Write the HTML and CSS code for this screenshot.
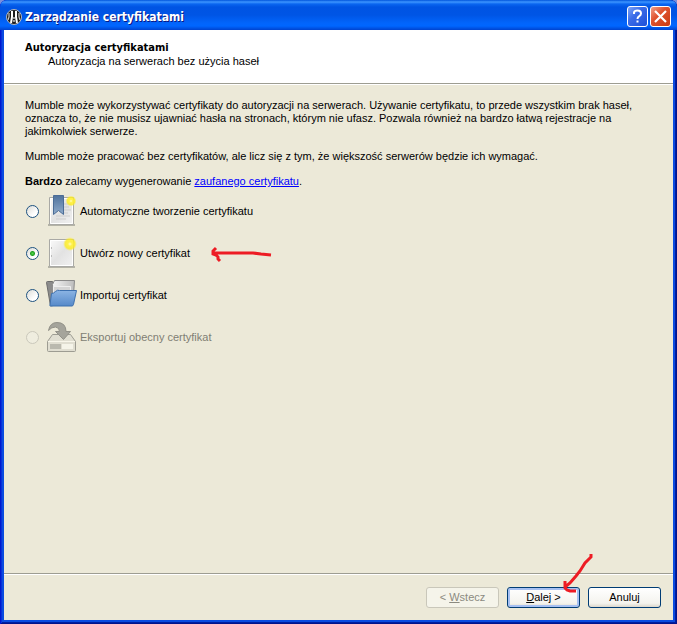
FILE: index.html
```html
<!DOCTYPE html>
<html lang="pl">
<head>
    <meta charset="utf-8">
    <title>Zarządzanie certyfikatami</title>
    <link rel="stylesheet" href="styles.css">
</head>
<body>
    <div class="window">
        <header class="titlebar">
            <svg class="app-icon" width="16" height="16" viewBox="0 0 16 16">
                <circle cx="8" cy="8" r="7.5" fill="#1a1a1a" stroke="#b4bac4"/>
                <path d="M3 4v4l-1 3M13 4v4l1 3" fill="none" stroke="#ccc" stroke-width="1.200"/>
                <path d="M6 2v6l-1 6M10 2v6l1 6" fill="none" stroke="#fff" stroke-width="2"/>
                <path d="M7 8h2v2H7zM7 11h2v2H7z" fill="#999"/>
            </svg>
            <h1 class="title">Zarządzanie certyfikatami</h1>
            <button class="caption-button help" type="button" aria-label="Pomoc">
                <svg width="21" height="21" viewBox="0 0 21 21">
                    <path d="M7 8V6.5Q7.500 4.500 10.500 4.500Q14 4.500 14 7.500Q14 9 12 10.300Q10.500 11.200 10.500 13" fill="none" stroke="#fff" stroke-width="2"/>
                    <path d="M9.500 14.500h2v2h-2z" fill="#fff"/>
                </svg>
            </button>
            <button class="caption-button close" type="button" aria-label="Zamknij">
                <svg width="21" height="21" viewBox="0 0 21 21">
                    <path d="M5 5l11 11M16 5l-11 11" stroke="#fff" stroke-width="2.200"/>
                </svg>
            </button>
        </header>

        <div class="banner">
            <h2 class="banner-title">Autoryzacja certyfikatami</h2>
            <p class="banner-text">Autoryzacja na serwerach bez użycia haseł</p>
        </div>

        <main class="content">
            <p>Mumble może wykorzystywać certyfikaty do autoryzacji na serwerach. Używanie certyfikatu, to przede wszystkim brak haseł, oznacza to, że nie musisz ujawniać hasła na stronach, którym nie ufasz. Pozwala również na bardzo łatwą rejestracje na jakimkolwiek serwerze.</p>
            <p>Mumble może pracować bez certyfikatów, ale licz się z tym, że większość serwerów będzie ich wymagać.</p>
            <p><b>Bardzo</b> zalecamy wygenerowanie <a href="#">zaufanego certyfikatu</a>.</p>

            <form class="options" id="cert-form">
                <label class="option">
                    <input type="radio" name="cert">
                    <svg width="32" height="32" viewBox="0 0 32 32">
                        <use href="#sheet"/>
                        <path d="M18 9h7M18 12h5M18 15h7M18 18h4M10 21h14M10 24h10" stroke="#cdcdcd"/>
                        <path d="M7.500.500h10v19l-5-4-5 4z" fill="url(#ribbon)" stroke="#4b6c96"/>
                        <circle cx="25" cy="6" r="5.500" fill="url(#glow)"/>
                    </svg>
                    <span>Automatyczne tworzenie certyfikatu</span>
                </label>
                <label class="option">
                    <input type="radio" name="cert" checked>
                    <svg width="32" height="32" viewBox="0 0 32 32">
                        <use href="#sheet"/>
                        <path d="M5.500 10v2M5.500 18v2" stroke="#bbb"/>
                        <circle cx="24" cy="7" r="7" fill="url(#glow)"/>
                    </svg>
                    <span>Utwórz nowy certyfikat</span>
                    <svg class="pen-arrow" width="62" height="18" viewBox="0 0 62 18">
                        <path d="M5 2L2 5v3l3 1M3 7h39l8 1 10 1M4 8l3 3v2l2 2" />
                    </svg>
                </label>
                <label class="option">
                    <input type="radio" name="cert">
                    <svg width="32" height="32" viewBox="0 0 32 32">
                        <path d="M.500 3.500q0-1 1-1h5l2 3h5v20l-9 1.500z" fill="#8c8c8c" stroke="#6d6d6d"/>
                        <path d="M6.500 5.500l2-4h20l-1 14-20 8z" fill="url(#silver)" stroke="#8a8a8a"/>
                        <path d="M7.500 7.500h17v8h-17z" fill="#d4d4d4" stroke="#eee"/>
                        <path d="M5.500 14.500q2 0 4-2t4-1h17l-3 14q-.500 1.500-1.500 1.500H4.500q-1 0-.500-1z" fill="url(#folder)" stroke="#3d70ae"/>
                    </svg>
                    <span>Importuj certyfikat</span>
                </label>
                <label class="option disabled">
                    <input type="radio" name="cert" disabled>
                    <svg width="32" height="32" viewBox="0 0 32 32">
                        <path d="M6.500 13.500h18l5 7v9q0 1-1 1h-26q-1 0-1-1v-9z" fill="#e0ded1" stroke="#9d9c92"/>
                        <path d="M2 20.500h27" stroke="#f8f6ea"/>
                        <path d="M4 23h11v5H4z" fill="#bab9ae"/>
                        <path d="M16 23h11v5H16z" fill="#f5f4e9"/>
                        <path d="M2.500 9.500Q4 1.500 11 1.500q9 0 9 9h4.500l-7 8-8-8h4q0-4-4-4.500-4 0-7 3.500z" fill="#a5a49b" stroke="#929188"/>
                    </svg>
                    <span>Eksportuj obecny certyfikat</span>
                </label>
            </form>
        </main>

        <footer class="buttons">
            <button class="button" type="button" disabled>&lt; <u>W</u>stecz</button>
            <button class="button default" type="submit" form="cert-form"><u>D</u>alej &gt;
                <svg class="pen-arrow-next" width="34" height="44" viewBox="0 0 34 44">
                    <path d="M31 2v3l-6 6-5 8-4 5-6 7-5 4M5 29v7l2 2 3 1h6" />
                </svg>
            </button>
            <button class="button" type="button">Anuluj</button>
        </footer>
    </div>

    <!-- shared gradients and shapes -->
    <svg class="defs" width="0" height="0">
        <defs>
            <linearGradient id="paper" x1="0" y1="0" x2="1" y2="1">
                <stop offset="0" stop-color="#fbfbfb"/>
                <stop offset=".5" stop-color="#e2e2e2"/>
                <stop offset="1" stop-color="#f2f2f2"/>
            </linearGradient>
            <linearGradient id="silver" x1="0" y1="0" x2="1" y2="0">
                <stop offset="0" stop-color="#f4f4f4"/>
                <stop offset="1" stop-color="#bdbdbd"/>
            </linearGradient>
            <linearGradient id="ribbon" x1="0" y1="0" x2="0" y2="1">
                <stop offset="0" stop-color="#4f729c"/>
                <stop offset="1" stop-color="#8fabcb"/>
            </linearGradient>
            <linearGradient id="folder" x1="0" y1="0" x2="0" y2="1">
                <stop offset="0" stop-color="#8db5e4"/>
                <stop offset="1" stop-color="#5589c9"/>
            </linearGradient>
            <radialGradient id="glow">
                <stop offset="0" stop-color="#fffcc0"/>
                <stop offset=".3" stop-color="#fff14a"/>
                <stop offset=".7" stop-color="#fdec1c" stop-opacity=".8"/>
                <stop offset="1" stop-color="#fdee50" stop-opacity="0"/>
            </radialGradient>
            <g id="sheet">
                <path d="M2 30h27" stroke="#b4b3a6" stroke-width="2"/>
                <path d="M3.500 2.500h24v27h-24z" fill="url(#paper)" stroke="#a9a9a5"/>
                <path d="M4.500 3.500h22v25h-22z" fill="none" stroke="#fff"/>
            </g>
        </defs>
    </svg>
</body>
</html>
```
FILE: styles.css
```css
* {
    box-sizing: border-box;
}

body {
    margin: 0;
    background: #7a8fdc;
    color: #000;
    font: 11px/13px "Liberation Sans", Tahoma, sans-serif;
}

h1, h2, p {
    margin: 0;
    font-size: 11px;
}

.defs {
    position: absolute;
}

.window {
    display: flex;
    flex-direction: column;
    min-height: 100vh;
    padding: 0 4px 4px;
    background: #0a4be0;
    border-radius: 7px 7px 0 0;
    box-shadow: inset 1px 0 #0019cf, inset -1px 0 #00138c, inset 0 -1px #00138c, inset 2px 0 #0831d9, inset -2px 0 #001ea0, inset 0 -2px #001ea0;
}

/* title bar */
.titlebar {
    display: flex;
    align-items: center;
    gap: 2px;
    height: 30px;
    margin: 0 -4px;
    padding: 3px 6px 0;
    border-radius: 7px 7px 0 0;
    background: linear-gradient(#0054dc, #3d95ff 2px, #0a66f0 4px, #0054e3 7px, #0055e5 15px, #0265fb 23px, #0066ff 26px, #0043cf);
}

.title {
    flex: 1;
    padding-left: 1px;
    color: #fff;
    font: bold 12px/16px "DejaVu Sans Condensed", "Trebuchet MS", sans-serif;
    text-shadow: 1px 1px #0a1883;
}

.caption-button {
    width: 21px;
    height: 21px;
    padding: 0;
    border: 1px solid #fff;
    border-radius: 3px;
}

.caption-button svg {
    display: block;
    margin: -1px;
}

.help {
    background: linear-gradient(135deg, #7fa5f7, #3a6be8 40%, #1c50d8);
}

.close {
    background: linear-gradient(135deg, #f0a08a, #e0532f 40%, #c93a12);
}

/* wizard header */
.banner {
    padding: 11px 21px 15px;
    background: #fff;
    border-bottom: 1px solid #9d9d92;
}

.banner-title {
    font-family: "DejaVu Sans Condensed", Tahoma, sans-serif;
}

.banner-text {
    padding: 1px 0 0 23px;
}

.content {
    flex: 1;
    padding: 14px 21px;
    background: #ece9d8;
    border-top: 1px solid #fff;
}

.content p {
    margin-bottom: 12px;
}

.content a {
    color: #00f;
}

/* certificate choices */
.options {
    display: flex;
    flex-direction: column;
    align-items: flex-start;
    gap: 10px;
    margin-top: -5px;
}

.option {
    position: relative;
    display: flex;
    align-items: center;
}

.option input {
    appearance: none;
    width: 13px;
    height: 13px;
    margin: 0 7px 0 1px;
    border: 1px solid #1d5281;
    border-radius: 50%;
    background: linear-gradient(135deg, #dcdcd7, #fff 70%);
}

.option input:checked {
    background: radial-gradient(circle, #55d551, #21a121 2px, #21a12100 3px), linear-gradient(135deg, #dcdcd7, #fff 70%);
}

.option input:disabled {
    border-color: #cac8bb;
    background: #efeddf;
}

.option span {
    padding-left: 2px;
}

.disabled {
    color: #7f7e74;
}

/* red pen marks */
.pen-arrow,
.pen-arrow-next {
    position: absolute;
    fill: none;
    stroke: #ed1c24;
    stroke-width: 3;
    pointer-events: none;
}

.pen-arrow {
    top: 9px;
    left: 186px;
}

.pen-arrow-next {
    top: -36px;
    left: 52px;
}

/* footer buttons */
.buttons {
    display: flex;
    justify-content: flex-end;
    gap: 8px;
    padding: 13px 12px 12px;
    background: #ece9d8;
    border-top: 1px solid #9d9d92;
    box-shadow: inset 0 1px #fff;
}

.button {
    position: relative;
    width: 73px;
    height: 21px;
    padding: 0;
    border: 1px solid #003c74;
    border-radius: 3px;
    background: linear-gradient(#fff, #f4f3ee 80%, #dcd7cb);
    color: #000;
    font: inherit;
}

.default {
    box-shadow: inset 0 0 0 2px #a6c0f2;
}

.button:disabled {
    border-color: #c9c7ba;
    background: #f5f4ea;
    color: #8b8a80;
}
```
